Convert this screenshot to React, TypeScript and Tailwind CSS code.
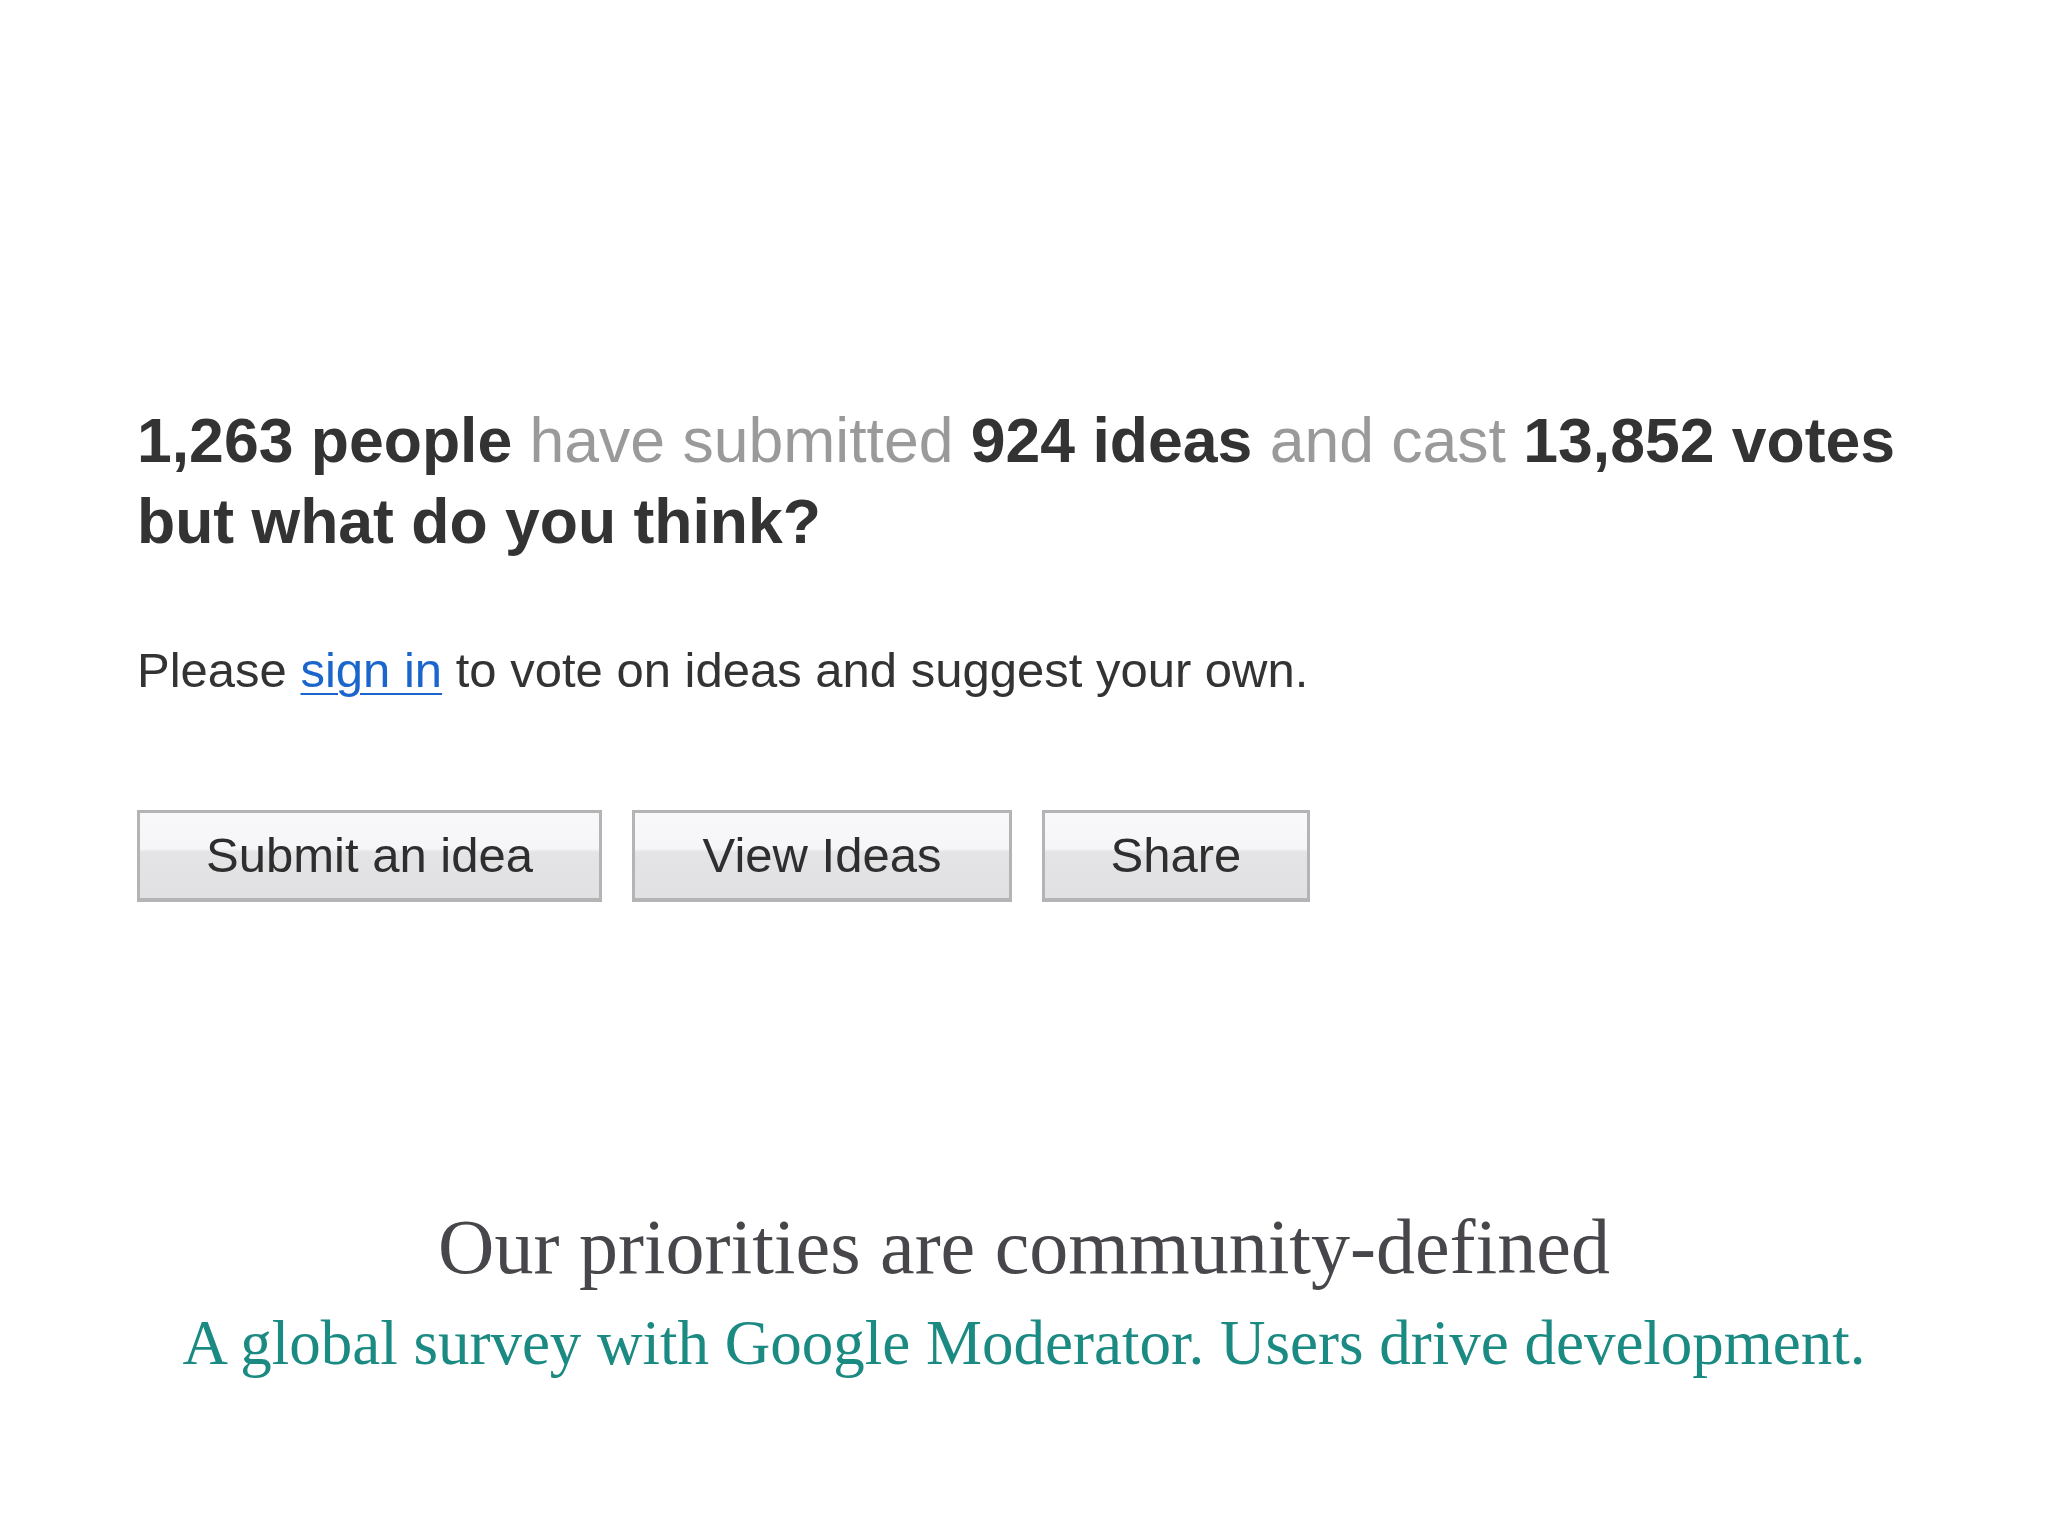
export default function App() {
  return (
    <div className="flex h-[1535px] w-[2048px] flex-col bg-white">
      <div className="pl-[137px] pt-[400px] font-['Liberation_Sans',Arial,sans-serif]">
        <h1 className="text-[62.5px] font-bold leading-[81px] text-[#333333]">
          1,263 people <span className="font-normal text-[#9a9a9a]">have submitted</span> 924 ideas{' '}
          <span className="font-normal text-[#9a9a9a]">and cast</span> 13,852 votes
          <br />
          but what do you think?
        </h1>

        <p className="mt-[80px] text-[49px] leading-[56px] text-[#333333]">
          Please{' '}
          <a href="#" className="text-[#1a66cc] underline decoration-2 underline-offset-[6px]">
            sign in
          </a>{' '}
          to vote on ideas and suggest your own.
        </p>

        <div className="mt-[112px] flex gap-[30px]">
          <Button label="Submit an idea" width="w-[465px]" />
          <Button label="View Ideas" width="w-[380px]" />
          <Button label="Share" width="w-[268px]" />
        </div>
      </div>

      <div className="mt-[297px] flex flex-col items-center font-['Liberation_Serif','Times_New_Roman',serif]">
        <h2 className="text-[78px] leading-[96px] text-[#48464a]">Our priorities are community-defined</h2>
        <p className="mt-[12px] text-[63px] leading-[72px] text-[#1b8a82]">
          A global survey with Google Moderator. Users drive development.
        </p>
      </div>
    </div>
  );
}

function Button({label, width}: {label: string; width: string}) {
  return (
    <button
      className={`${width} h-[92px] border-x-[3px] border-t-[3px] border-b-[4px] border-[#b4b3b6] bg-[linear-gradient(to_bottom,#f8f7f9_0%,#f6f5f7_42%,#e4e3e6_46%,#e1e0e3_100%)] text-[49px] leading-none text-[#2e2e2e]`}
    >
      {label}
    </button>
  );
}
